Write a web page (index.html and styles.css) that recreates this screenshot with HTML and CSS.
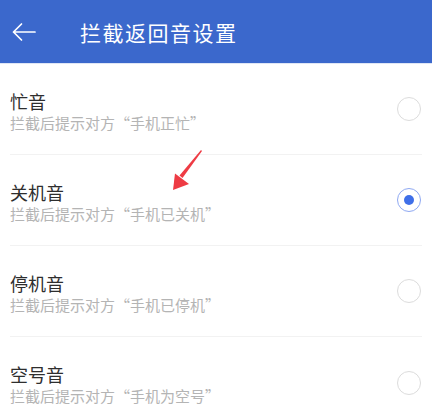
FILE: index.html
```html
<!DOCTYPE html>
<html lang="zh-CN">
<head>
<meta charset="utf-8">
<title>拦截返回音设置</title>
<link rel="stylesheet" href="styles.css">
</head>
<body>
<header class="topbar">
  <svg class="back" width="26" height="20" viewBox="0 0 26 20">
    <path d="M24 10H2.5M10.5 2L2.5 10l8 8" fill="none" stroke="#fff" stroke-width="1.7" stroke-linecap="round" stroke-linejoin="round"/>
  </svg>
  <h1 class="title">拦截返回音设置</h1>
</header>
<main class="list">
  <div class="row">
    <div class="text">
      <div class="name">忙音</div>
      <div class="desc">拦截后提示对方“手机正忙”</div>
    </div>
    <span class="radio"></span>
  </div>
  <div class="row">
    <div class="text">
      <div class="name">关机音</div>
      <div class="desc">拦截后提示对方“手机已关机”</div>
    </div>
    <span class="radio checked"></span>
  </div>
  <div class="row">
    <div class="text">
      <div class="name">停机音</div>
      <div class="desc">拦截后提示对方“手机已停机”</div>
    </div>
    <span class="radio"></span>
  </div>
  <div class="row">
    <div class="text">
      <div class="name">空号音</div>
      <div class="desc">拦截后提示对方“手机为空号”</div>
    </div>
    <span class="radio"></span>
  </div>
  <svg class="pointer" width="45" height="50" viewBox="0 0 45 50">
    <path d="M36 5 L37 6 L17.5 33 L14.5 30.5 Z" fill="#ee3b44"/>
    <path d="M8 45 L10 28.5 L24 39 Z" fill="#ee3b44"/>
  </svg>
</main>
</body>
</html>
```

FILE: styles.css
```css
html, body {
  margin: 0;
  padding: 0;
  background: #ffffff;
}
body {
  font-family: "Noto Sans CJK SC", "Noto Sans", sans-serif;
  width: 432px;
  height: 405px;
  overflow: hidden;
}
.topbar {
  height: 64px;
  background: #3b68cc;
  display: flex;
  align-items: center;
  border-bottom: 1px solid #dfe6f5;
  box-sizing: border-box;
}
.back {
  margin-left: 11px;
  flex: none;
}
.title {
  margin: 0 0 0 43px;
  font-size: 21px;
  font-weight: 400;
  color: #ffffff;
  letter-spacing: 1.5px;
  line-height: 28px;
}
.list {
  position: relative;
}
.row {
  margin: 0 10px;
  height: 91px;
  box-sizing: border-box;
  border-bottom: 1px solid #f2f2f2;
  display: flex;
  align-items: center;
  justify-content: space-between;
}
.row:last-of-type {
  border-bottom: none;
}
.text {
  padding-top: 5px;
}
.name {
  font-size: 18px;
  line-height: 22px;
  color: #2e2e2e;
}
.desc {
  font-size: 15px;
  line-height: 22px;
  color: #b4b4b4;
}
.radio {
  width: 24px;
  height: 24px;
  box-sizing: border-box;
  border: 1.5px solid #dcdcdc;
  border-radius: 50%;
  margin-right: 1px;
  display: flex;
  align-items: center;
  justify-content: center;
  flex: none;
}
.radio.checked {
  border-color: #8ea8f2;
}
.radio.checked::after {
  content: "";
  width: 10px;
  height: 10px;
  border-radius: 50%;
  background: #3f6fe8;
}
.pointer {
  position: absolute;
  left: 165px;
  top: 81px;
}
```
